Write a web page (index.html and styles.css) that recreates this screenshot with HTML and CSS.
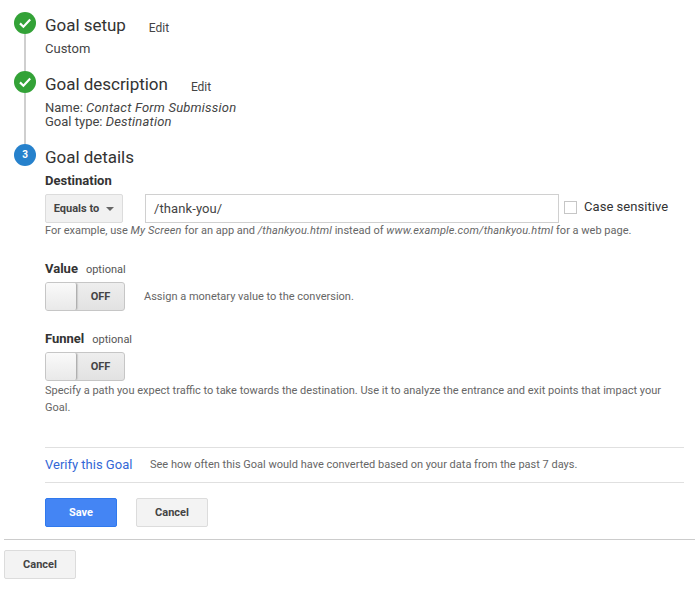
FILE: index.html
```html
<!DOCTYPE html>
<html lang="en">
<head>
<meta charset="utf-8">
<title>Goal details</title>
<link rel="stylesheet" href="styles.css">
</head>
<body>
<main class="wizard">
  <section class="step step-one">
    <div class="rail">
      <svg class="badge" viewBox="0 0 22 22"><circle cx="11" cy="11" r="11" fill="#33a237"/><path d="M6 11.4l3.4 3.3L16.2 7.6" fill="none" stroke="#fff" stroke-width="2.2"/></svg>
      <div class="line"></div>
    </div>
    <div class="body">
      <div class="head"><h2>Goal setup</h2><a class="edit">Edit</a></div>
      <p class="summary">Custom</p>
    </div>
  </section>
  <section class="step step-two">
    <div class="rail">
      <svg class="badge" viewBox="0 0 22 22"><circle cx="11" cy="11" r="11" fill="#33a237"/><path d="M6 11.4l3.4 3.3L16.2 7.6" fill="none" stroke="#fff" stroke-width="2.2"/></svg>
      <div class="line"></div>
    </div>
    <div class="body">
      <div class="head"><h2>Goal description</h2><a class="edit">Edit</a></div>
      <p class="summary">Name: <em>Contact Form Submission</em><br>Goal type: <em>Destination</em></p>
    </div>
  </section>
  <section class="step step-three">
    <div class="rail"><div class="badge number">3</div></div>
    <div class="body">
      <div class="head"><h2>Goal details</h2></div>
      <h3 class="dest-label">Destination</h3>
      <div class="dest-row">
        <button class="select">Equals to<span class="caret"></span></button>
        <div class="text-input">/thank-you/</div>
        <span class="checkbox"></span>
        <span class="check-label">Case sensitive</span>
      </div>
      <p class="hint">For example, use <em>My Screen</em> for an app and <em>/thankyou.html</em> instead of <em>www.example.com/thankyou.html</em> for a web page.</p>

      <div class="opt-label opt-value"><strong>Value</strong><span>optional</span></div>
      <div class="toggle-row">
        <div class="toggle"><span class="knob"></span><span class="off">OFF</span></div>
        <span class="hint">Assign a monetary value to the conversion.</span>
      </div>

      <div class="opt-label opt-funnel"><strong>Funnel</strong><span>optional</span></div>
      <div class="toggle"><span class="knob"></span><span class="off">OFF</span></div>
      <p class="hint funnel-hint">Specify a path you expect traffic to take towards the destination. Use it to analyze the entrance and exit points that impact your Goal.</p>

      <div class="verify"><a>Verify this Goal</a><span class="hint">See how often this Goal would have converted based on your data from the past 7 days.</span></div>
      <div class="actions"><button class="btn primary">Save</button><button class="btn">Cancel</button></div>
    </div>
  </section>
</main>
<footer class="foot"><button class="btn">Cancel</button></footer>
</body>
</html>
```
FILE: styles.css
```css
* { box-sizing: border-box; }
html, body { margin: 0; padding: 0; background: #fff; }
body { width: 695px; height: 604px; overflow: hidden; font-family: Roboto, "Liberation Sans", sans-serif; color: #333; font-size: 13px; }
.wizard { padding: 12px 11px 0 14px; height: 539px; }
.step { display: flex; }
.rail { width: 31px; flex: none; display: flex; flex-direction: column; align-items: flex-start; }
.badge { width: 22px; height: 22px; flex: none; display: block; }
.line { width: 2px; flex: 1; background: #cfcfcf; margin-left: 10px; }
.number { border-radius: 50%; background: #2681cc; color: #fff; font-size: 10px; font-weight: 700; text-align: center; line-height: 22px; }
.body { flex: 1; min-width: 0; }
.step-one { height: 59px; }
.step-two { height: 73px; }
.head { display: flex; align-items: baseline; height: 26px; }
h2 { margin: 0; font-size: 17px; font-weight: 400; line-height: 26px; color: #333; letter-spacing: -0.03px; }
.edit { font-size: 12px; margin-left: 23px; color: #444; position: relative; top: 1px; }
.summary { margin: 0; line-height: 14px; font-size: 13px; color: #444; }
.summary em { letter-spacing: 0.2px; }
.step-one .summary { padding-top: 3px; line-height: 16px; }
.step-two .summary { padding-top: 4px; }
.dest-label { margin: 3px 0 0; font-size: 13px; font-weight: 700; line-height: 16px; color: #333; }
.dest-row { display: flex; align-items: center; margin-top: 5px; height: 29px; }
.select { width: 78px; height: 29px; border: 1px solid #dcdcdc; border-radius: 2px; background: #f1f1f1; font: 700 11px Roboto, "Liberation Sans", sans-serif; color: #444; padding: 0; display: flex; align-items: center; justify-content: center; }
.caret { width: 0; height: 0; border: 4px solid transparent; border-top: 4px solid #666; border-bottom: 0; margin-left: 7px; }
.text-input { width: 414px; height: 29px; margin-left: 22px; border: 1px solid #d0d0d0; font-size: 13px; line-height: 27px; padding-left: 8px; color: #444; letter-spacing: 0.1px; }
.checkbox { width: 13px; height: 13px; border: 1px solid #c6c6c6; margin-left: 5px; flex: none; position: relative; top: -1px; }
.check-label { margin-left: 7px; font-size: 13px; color: #333; position: relative; top: -2px; letter-spacing: 0.05px; }
.hint { font-size: 11px; color: #666; margin: 0; line-height: 16px; }
.hint em { letter-spacing: 0.16px; }
.dest-row + .hint { margin-top: 0; height: 16px; white-space: nowrap; }
.opt-label { display: flex; align-items: baseline; line-height: 16px; }
.opt-label strong { font-size: 13px; font-weight: 700; color: #333; }
.opt-label span { font-size: 11px; color: #555; margin-left: 8px; }
.opt-value { margin-top: 22px; }
.opt-funnel { margin-top: 20px; }
.toggle-row { display: flex; align-items: center; margin-top: 4px; }
.toggle-row .hint { margin-left: 19px; }
.opt-funnel + .toggle { margin-top: 4px; }
.toggle { width: 80px; height: 29px; border: 1px solid #c6c6c6; border-radius: 3px; background: linear-gradient(#eee, #e2e2e2); display: flex; flex: none; }
.knob { width: 31px; height: 27px; background: linear-gradient(#fafafa, #e9e9e9); border-right: 1px solid #b0b0b0; border-radius: 2px; box-shadow: 1px 0 1px #ccc; }
.off { flex: 1; text-align: center; font-size: 11px; font-weight: 700; line-height: 27px; color: #444; }
.funnel-hint { margin-top: 1px; line-height: 17px; }
.verify { display: flex; align-items: center; height: 36px; margin-top: 31px; padding-bottom: 1px; border-top: 1px solid #e0e0e0; border-bottom: 1px solid #e0e0e0; }
.verify a { font-size: 13px; color: #3367d6; width: 105px; flex: none; }
.actions { display: flex; gap: 19px; margin-top: 15px; }
.btn { width: 72px; height: 29px; border: 1px solid #dcdcdc; border-radius: 2px; background: #f3f3f3; font: 700 11px Roboto, "Liberation Sans", sans-serif; color: #444; padding: 0; }
.primary { background: #4485f4; border-color: #3079ed; color: #fff; }
.foot { margin-left: 4px; border-top: 1px solid #ccc; padding-top: 10px; }
```
